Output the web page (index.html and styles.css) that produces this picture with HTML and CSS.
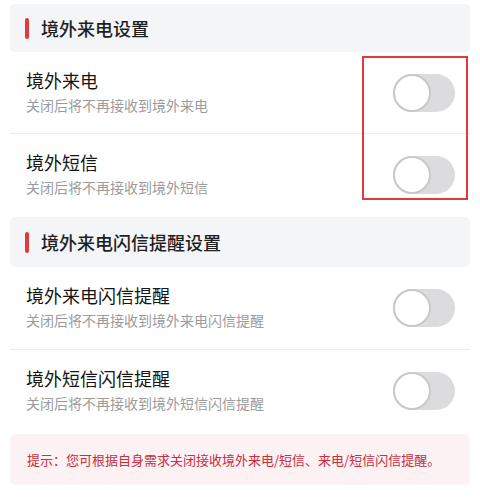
FILE: index.html
```html
<!DOCTYPE html>
<html lang="zh">
<head>
<meta charset="utf-8">
<link rel="stylesheet" href="styles.css">
</head>
<body>
<div class="page">
  <div class="group">
    <div class="head"><span class="bar"></span><span class="head-text">境外来电设置</span></div>
    <div class="row">
      <div class="texts"><div class="title">境外来电</div><div class="sub">关闭后将不再接收到境外来电</div></div>
      <span class="toggle"><span class="knob"></span></span>
    </div>
    <div class="row last">
      <div class="texts"><div class="title">境外短信</div><div class="sub">关闭后将不再接收到境外短信</div></div>
      <span class="toggle"><span class="knob"></span></span>
    </div>
    <div class="mark"></div>
  </div>
  <div class="group second">
    <div class="head"><span class="bar"></span><span class="head-text">境外来电闪信提醒设置</span></div>
    <div class="row">
      <div class="texts"><div class="title">境外来电闪信提醒</div><div class="sub">关闭后将不再接收到境外来电闪信提醒</div></div>
      <span class="toggle"><span class="knob"></span></span>
    </div>
    <div class="row last">
      <div class="texts"><div class="title">境外短信闪信提醒</div><div class="sub">关闭后将不再接收到境外短信闪信提醒</div></div>
      <span class="toggle"><span class="knob"></span></span>
    </div>
  </div>
  <div class="tip">提示：您可根据自身需求关闭接收境外来电/短信、来电/短信闪信提醒。</div>
</div>
</body>
</html>
```

FILE: styles.css
```css
* { box-sizing: border-box; }
html, body { margin: 0; padding: 0; background: #ffffff; }
body {
  font-family: "Noto Sans CJK SC", "Noto Sans", sans-serif;
  width: 480px;
  height: 499px;
  overflow: hidden;
}
.page {
  padding: 4px 10px 0 10px;
  display: flex;
  flex-direction: column;
}
.group {
  position: relative;
  display: flex;
  flex-direction: column;
  margin-bottom: 2px;
}
.head {
  height: 48px;
  background: #f4f5f7;
  border-radius: 5px;
  display: flex;
  align-items: center;
  padding-left: 15px;
}
.second .head { height: 50px; }
.bar {
  width: 4px;
  height: 21px;
  border-radius: 2px;
  background: #e0393f;
  margin-right: 12px;
}
.head-text {
  font-size: 18px;
  font-weight: 500;
  color: #1f1f1f;
  line-height: 1;
}
.row {
  height: 82px;
  display: flex;
  align-items: center;
  justify-content: space-between;
  padding: 0 15px 0 16px;
  border-bottom: 1px solid #eeeeee;
}
.row.last { border-bottom: none; height: 81px; }
.second .row { height: 83px; }
.second .row.last { height: 82px; }
.texts {
  display: flex;
  flex-direction: column;
  gap: 6px;
  margin-top: -2px;
}
.title {
  font-size: 18px;
  line-height: 20px;
  color: #151515;
}
.sub {
  font-size: 14px;
  line-height: 18px;
  color: #9b9b9b;
}
.toggle {
  position: relative;
  width: 62px;
  height: 38px;
  border-radius: 19px;
  background: #dcdcdf;
  flex: none;
}
.knob {
  position: absolute;
  left: 0;
  top: 0;
  width: 38px;
  height: 38px;
  border-radius: 50%;
  background: #ffffff;
  border: 2px solid #c8c8cb;
}
.mark {
  position: absolute;
  left: 352px;
  top: 52px;
  width: 106px;
  height: 144px;
  border: 2px solid #e03a3e;
  pointer-events: none;
}
.tip {
  height: 51px;
  background: #fcf1f3;
  border-radius: 6px;
  display: flex;
  align-items: center;
  padding-left: 17px;
  font-size: 13px;
  color: #c92d3e;
  white-space: nowrap;
}
```
